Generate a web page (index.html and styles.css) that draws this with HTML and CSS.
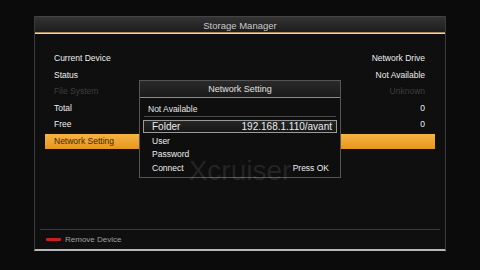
FILE: index.html
```html
<!DOCTYPE html>
<html lang="en">
<head>
    <meta charset="UTF-8">
    <title>Storage Manager</title>
    <link rel="stylesheet" href="styles.css">
</head>
<body>
    <div class="frame">
        <div class="header">Storage Manager</div>

        <div class="rows">
            <div class="row"><span>Current Device</span><span>Network Drive</span></div>
            <div class="row"><span>Status</span><span>Not Available</span></div>
            <div class="row dim"><span>File System</span><span>Unknown</span></div>
            <div class="row"><span>Total</span><span>0</span></div>
            <div class="row"><span>Free</span><span>0</span></div>
            <div class="row active"><span>Network Setting</span><span></span></div>
        </div>

        <div class="popup">
            <div class="popup-title">Network Setting</div>
            <div class="popup-status">Not Available</div>
            <div class="popup-list">
                <div class="item selected"><span>Folder</span><span>192.168.1.110/avant</span></div>
                <div class="item"><span>User</span><span></span></div>
                <div class="item"><span>Password</span><span></span></div>
                <div class="item"><span>Connect</span><span>Press OK</span></div>
            </div>
        </div>

        <div class="watermark">Xcruiser</div>

        <div class="footer">
            <span class="red-key"></span>
            <span>Remove Device</span>
        </div>
    </div>
</body>
</html>
```

FILE: styles.css
```css
body {
    margin: 0;
    width: 480px;
    height: 270px;
    background: #0b0b0b;
    font-family: "Liberation Sans", Arial, sans-serif;
    color: #e6e6e6;
    overflow: hidden;
}

.frame {
    position: relative;
    margin: 16px 0 0 34px;
    width: 410px;
    height: 233px;
    border: 1px solid #3a3a3a;
    border-top: none;
    border-bottom: 2px solid #b8b8b8;
    background: #0f0f0f;
    display: flex;
    flex-direction: column;
}

.header {
    height: 16px;
    line-height: 17px;
    text-align: center;
    font-size: 9.5px;
    color: #c8c8c8;
    background: linear-gradient(#343434, #1c1c1c);
    border-top: 1px solid #444;
    border-bottom: 1px solid #d8d8d8;
    box-shadow: inset 0 -1px 0 #b08a60;
}

.rows {
    padding: 16px 10px 0 10px;
}

.row {
    height: 16.5px;
    display: flex;
    justify-content: space-between;
    align-items: center;
    padding: 0 10px 0 9px;
    font-size: 8.5px;
    color: #ededed;
}

.row.dim {
    color: #3e3e3e;
}

.row.active {
    height: 15px;
    margin-top: 1px;
    background: linear-gradient(#f6b444, #e8961c);
    color: #3a2608;
}

.watermark {
    position: absolute;
    left: 0;
    right: 0;
    top: 141px;
    text-align: center;
    font-size: 28px;
    line-height: 28px;
    color: rgba(255, 255, 255, 0.1);
    pointer-events: none;
}

.popup {
    position: absolute;
    left: 104px;
    top: 64px;
    width: 200px;
    height: 96px;
    border: 1px solid #555;
    background: #0e0e0e;
}

.popup-title {
    height: 16px;
    line-height: 17px;
    text-align: center;
    font-size: 9px;
    color: #e0e0e0;
    background: linear-gradient(#2a2a2a, #1a1a1a);
    border-bottom: 1px solid #8a8a8a;
}

.popup-status {
    margin: 0 4px;
    padding: 0 4px;
    height: 18px;
    line-height: 22px;
    font-size: 8.5px;
    border-bottom: 1px solid #4a4a4a;
}

.popup-list {
    padding: 3px 3px 0 3px;
}

.item {
    height: 13.5px;
    display: flex;
    justify-content: space-between;
    align-items: center;
    padding: 0 8px 0 9px;
    font-size: 8.5px;
    color: #ededed;
}

.item.selected {
    height: 11px;
    margin-bottom: 1px;
    border: 1px solid #9a9a9a;
    background: linear-gradient(#262626, #161616);
    padding: 0 4px 0 8px;
    font-size: 10px;
}

.footer {
    margin: auto 5px 0 5px;
    height: 19px;
    border-top: 1px solid #3a3a3a;
    display: flex;
    align-items: center;
    padding-left: 6px;
    font-size: 8px;
    color: #a0a0a0;
}

.red-key {
    width: 15px;
    height: 3px;
    margin-right: 4px;
    background: #c82020;
    border-radius: 1px;
}
```
